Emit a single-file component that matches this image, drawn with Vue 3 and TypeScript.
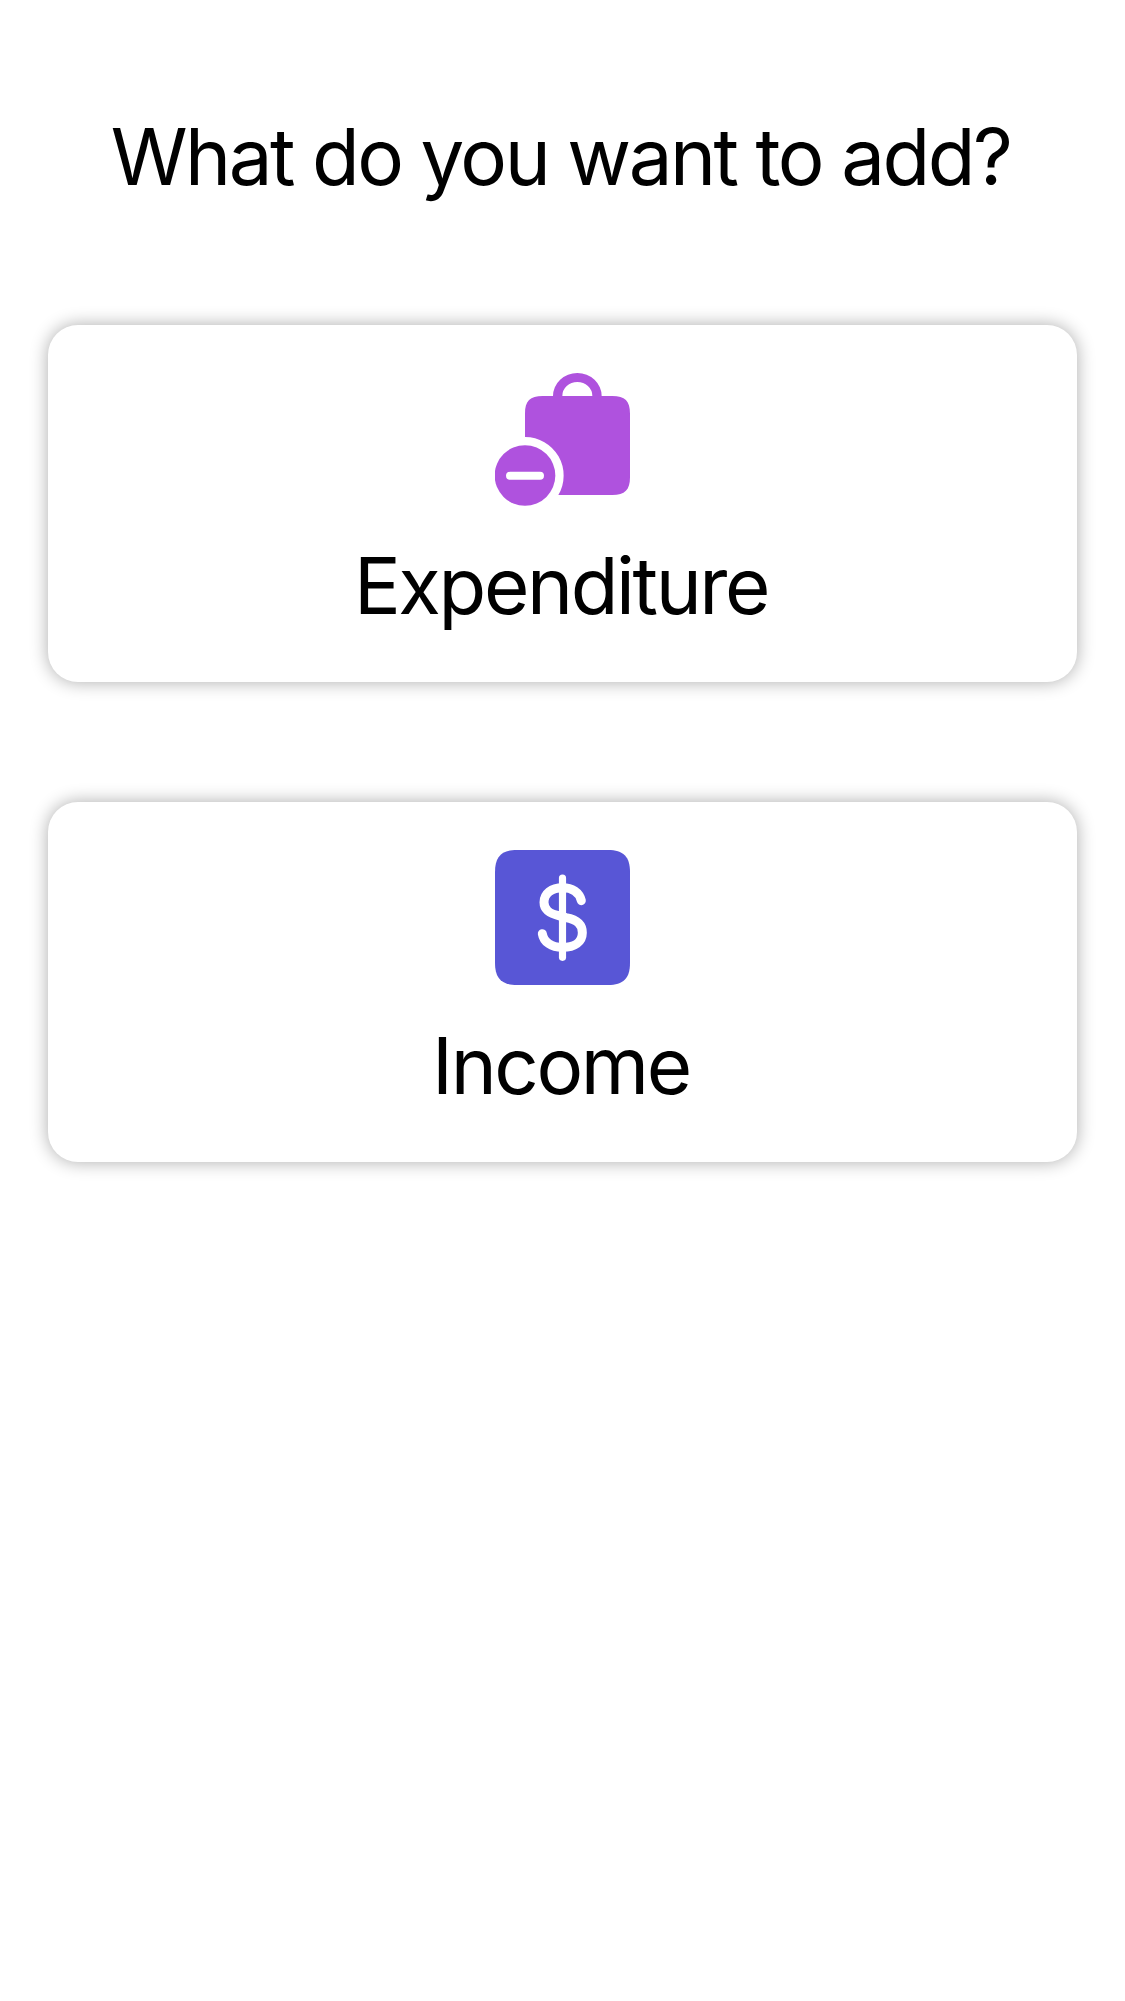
<script setup lang="ts">
type Kind = 'expenditure' | 'income'

const options: { kind: Kind; label: string }[] = [
  { kind: 'expenditure', label: 'Expenditure' },
  { kind: 'income', label: 'Income' },
]
</script>

<template>
  <main class="screen">
    <h1 class="title">What do you want to add?</h1>
    <div class="options">
      <button v-for="o in options" :key="o.kind" class="card" type="button">
        <svg v-if="o.kind === 'expenditure'" class="icon bag" viewBox="45 39 405 399" aria-hidden="true">
          <path
            d="M135 231V161C135 123 150 108 188 108H219A73 69 0 0 1 365 108H397C435 108 450 123 450 161V352C450 390 435 405 397 405H235A115.500 115.500 0 0 0 135 231ZM247 108H337A45 42 0 0 0 247 108Z"
            fill-rule="evenodd"
          />
          <circle cx="135" cy="346.500" r="91" />
          <path class="line" d="M90 347.500H180" stroke-width="24" />
        </svg>
        <svg v-else class="icon dollar" viewBox="45 45 405 405" aria-hidden="true">
          <path d="M111 45H384C430 45 450 65 450 111V384C450 430 430 450 384 450H111C65 450 45 430 45 384V111C45 65 65 45 111 45Z" />
          <path class="line" d="M247.500 129V367" stroke-width="21.500" />
          <path
            class="line"
            d="M304 197C298 172 276 158 248 158C214 158 192 176 192 202C192 225 208 236 240 243L258 248C290 254 307 267 307 293C307 320 285 337 247 337C214 337 191 321 187 296"
            stroke-width="27"
          />
        </svg>
        <span class="label" :class="o.kind">{{ o.label }}</span>
      </button>
    </div>
  </main>
</template>

<style>
body {
  background: #fff;
}
</style>

<style scoped>
.screen {
  box-sizing: border-box;
  min-height: 2001px;
  padding: 108px 48px 0;
  background: #fff;
  color: #000;
  font-family: Inter, sans-serif;
}

.title {
  margin: 0;
  padding-right: 4px;
  font-size: 78px;
  font-weight: 400;
  letter-spacing: -2.5px;
  word-spacing: -0.4px;
  line-height: 97px;
  text-align: center;
  white-space: nowrap;
}

.options {
  display: flex;
  flex-direction: column;
  gap: 120px;
  margin-top: 120px;
}

.card {
  display: flex;
  flex-direction: column;
  align-items: center;
  padding: 48px 0;
  border: 0;
  border-radius: 30px;
  background: #fff;
  color: inherit;
  font: inherit;
  box-shadow: 0 0 18px rgba(0, 0, 0, 0.33);
}

.icon {
  display: block;
  width: 135px;
}

.bag {
  height: 133px;
  fill: #af52de;
}

.dollar {
  height: 135px;
  fill: #5856d6;
}

.line {
  fill: none;
  stroke: #fff;
  stroke-linecap: round;
  stroke-linejoin: round;
}

.label {
  margin-top: 31px;
  padding-right: 3px;
  font-size: 78px;
  letter-spacing: -2.4px;
  line-height: 97px;
}

.income {
  margin-top: 32px;
}
</style>
